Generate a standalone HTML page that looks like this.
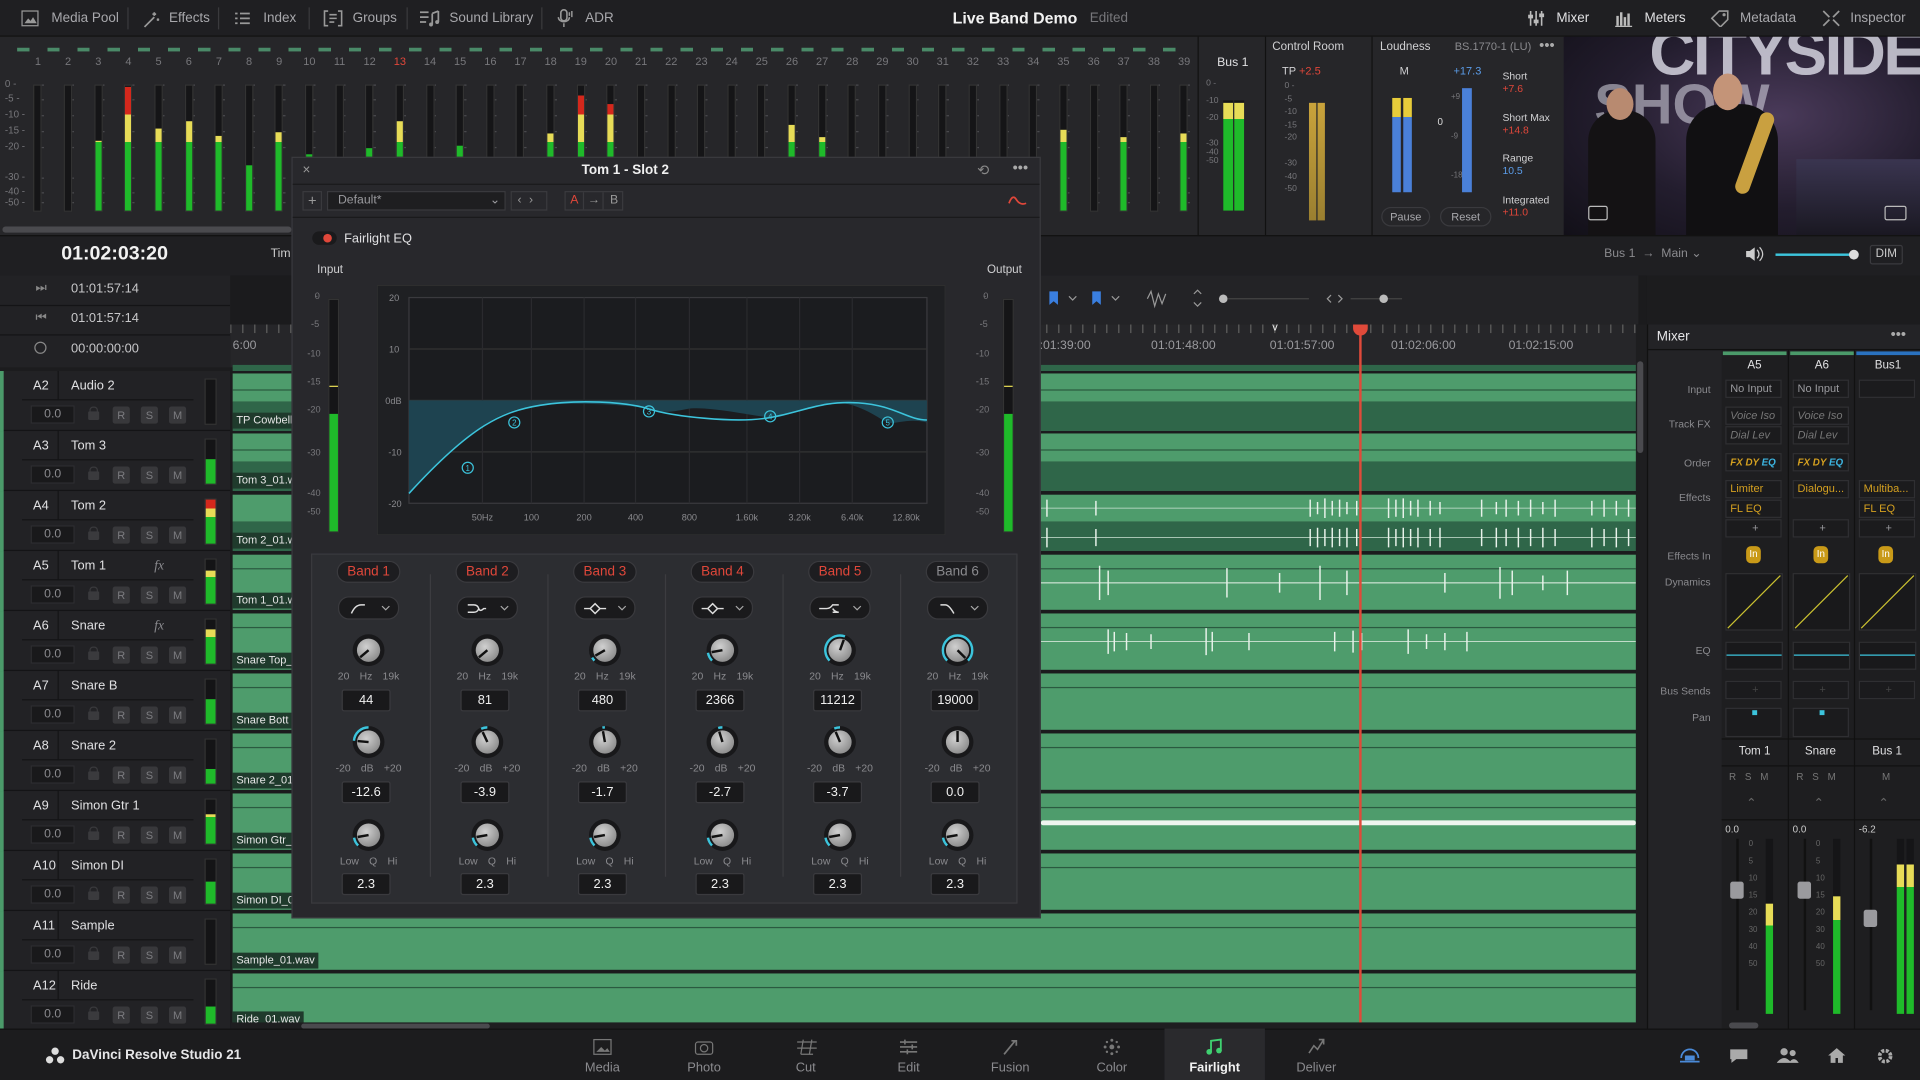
<!DOCTYPE html>
<html><head><meta charset="utf-8">
<style>
*{box-sizing:border-box;margin:0;padding:0}
html,body{width:1920px;height:1080px;overflow:hidden;background:#1c1c1e}
#w{position:absolute;left:0;top:0;width:1568px;height:882px;transform:scale(1.2244898);transform-origin:0 0;font-family:"Liberation Sans",sans-serif;color:#a8a8ac;font-size:10px;background:#1c1c1e;overflow:hidden}
.a{position:absolute}
.t{position:absolute;white-space:nowrap}
#top{left:0;top:0;width:1568px;height:30px;background:#1f1f22;border-bottom:1px solid #111}
#top .t{top:9px;font-size:11px;color:#a8a8ac}
.sep{position:absolute;top:6px;width:1px;height:18px;background:#3a3a3d}
#mtr{left:0;top:30px;width:978px;height:162px;background:#262629}
.dash{position:absolute;left:20px;width:958px;height:1px;background:repeating-linear-gradient(90deg,transparent 0 10px,#4a4a4e 10px 16px,transparent 16px 24.63px)}
.m{position:absolute;top:69px;width:7px;height:104px;background:#151517;border:1px solid #333}
.m i{position:absolute;left:0;right:0;bottom:0;background:linear-gradient(to top,#1fba2a 0 55%,#e7dc57 55% 77%,#d4281c 77%) bottom/100% 102px no-repeat}
.lbl{position:absolute;top:45px;font-size:9px;color:#77777b;width:20px;text-align:center}
.sc{position:absolute;left:4px;font-size:8px;color:#77777b}
.trk{position:absolute;left:0;width:188px;height:49px;background:#222225;border-bottom:1px solid #141416}
.trk .id{position:absolute;left:18px;top:0;width:30px;height:24px;line-height:24px;padding-left:9px;color:#e0e0e2;font-size:10.5px;border-right:1px solid #141416;border-bottom:1px solid #141416}
.trk .nm{position:absolute;left:48px;top:0;width:110px;height:24px;line-height:24px;padding-left:10px;color:#e0e0e2;font-size:10.5px;border-bottom:1px solid #141416}
.trk .fx{position:absolute;left:126px;top:6px;font-style:italic;color:#8a8a8e;font-size:11px;font-family:"Liberation Serif",serif}
.trk .v{position:absolute;left:25px;top:28px;width:36px;height:15px;background:#19191b;border:1px solid #2e2e31;text-align:center;line-height:13px;color:#8a8a8e}
.trk .lk{position:absolute;left:72px;top:33px;width:9px;height:7px;background:#3a3a3d;border-radius:1px}
.trk .lk:before{content:"";position:absolute;left:1px;top:-4px;width:5px;height:4px;border:1px solid #3a3a3d;border-bottom:0;border-radius:3px 3px 0 0}
.trk .b{position:absolute;top:29px;width:14px;height:14px;background:#38383b;border-radius:2px;text-align:center;line-height:14px;color:#7c7c80;font-size:9px}
.trk .gl{position:absolute;left:0;top:0;width:3px;height:49px;background:#4b9a6a}
.trk .tm{position:absolute;left:167px;top:6px;width:10px;height:38px;background:#141416;border:1px solid #333}
.trk .tm i{position:absolute;left:0;right:0;bottom:0;background:linear-gradient(to top,#1fba2a 0 60%,#e7dc57 60% 80%,#d4281c 80%) bottom/100% 36px no-repeat}
.ln{position:absolute;left:190px;width:1146px}
.lt{background:#4e9c6c}
.dk{background:#2f6649}
.cl{position:absolute;left:190px;height:13px;line-height:13px;padding:0 3px;background:#1f3a2c;color:#e6e6e6;font-size:9px}
#eq{left:238px;top:128px;width:612px;height:622px;background:#28282c;border:1px solid #3a3a3e;z-index:5}
.kn{position:absolute;width:30px;height:30px}
.pill{position:absolute;width:52px;height:18px;border-radius:9px;background:#1d1d20;border:1px solid #3a3a3e;text-align:center;line-height:16px;font-size:11px;color:#e0473a}
.dd{position:absolute;width:50px;height:19px;border-radius:9px;background:#1a1a1c;border:1px solid #3a3a3e}
.vb{position:absolute;width:40px;height:18px;background:#19191b;border:1px solid #3a3a3e;border-radius:2px;text-align:center;line-height:16px;color:#f0f0f0;font-size:10.5px}
.kl{position:absolute;font-size:8.5px;color:#8a8a8e;width:60px;text-align:center;word-spacing:6px}
#mix{left:1345px;top:265px;width:223px;height:577px;background:#232326;border-left:1px solid #111}
.ml{position:absolute;right:171px;font-size:8.5px;color:#8a8a8e;text-align:right;white-space:nowrap}
.mc{position:absolute;width:46px;height:15px;background:#1b1b1d;border:1px solid #2f2f32;font-size:9px;line-height:13px;padding-left:3px;color:#9a9a9e;white-space:nowrap;overflow:hidden}
.pg{position:absolute;top:840px;width:82px;height:42px;text-align:center;font-size:10.5px;color:#8a8a8e}
.pg span{position:absolute;left:0;right:0;top:26px}
.pg svg{position:absolute;left:33px;top:8px}
</style></head><body><div id="w">

<svg width="0" height="0" style="position:absolute"><defs>
<radialGradient id="kg" cx="40%" cy="35%" r="70%"><stop offset="0" stop-color="#d0d0d0"/><stop offset="1" stop-color="#8a8a8a"/></radialGradient>
</defs></svg>

<!-- TOP BAR -->
<div id="top" class="a">
<svg class="a" style="left:17px;top:8px" width="15" height="14"><rect x="1" y="1" width="13" height="12" fill="none" stroke="#999"/><path d="M3 11l3-4 2 2 2-3 3 5z" fill="#999"/></svg>
<div class="t" style="left:42px">Media Pool</div><div class="sep" style="left:104px"></div>
<svg class="a" style="left:115px;top:7px" width="16" height="16"><path d="M3 15l8-8M11 3v3M9.5 4.5h3M14 8v2M13 9h2" stroke="#999" stroke-width="1.4" fill="none"/></svg>
<div class="t" style="left:138px">Effects</div><div class="sep" style="left:178px"></div>
<svg class="a" style="left:191px;top:9px" width="14" height="12"><path d="M1 2h2M5 2h8M1 6h2M5 6h8M1 10h2M5 10h8" stroke="#999" stroke-width="1.4"/></svg>
<div class="t" style="left:215px">Index</div><div class="sep" style="left:252px"></div>
<svg class="a" style="left:264px;top:8px" width="16" height="14"><path d="M4 1H1v12h3M12 1h3v12h-3M5 4h6M5 7h6M5 10h4" stroke="#999" stroke-width="1.3" fill="none"/></svg>
<div class="t" style="left:288px">Groups</div><div class="sep" style="left:332px"></div>
<svg class="a" style="left:342px;top:8px" width="18" height="14"><path d="M1 2h7M1 6h7M1 10h5M11 3v9M16 1v9M11 3l5-2" stroke="#999" stroke-width="1.4" fill="none"/><circle cx="10" cy="12" r="1.6" fill="#999"/><circle cx="15" cy="10" r="1.6" fill="#999"/></svg>
<div class="t" style="left:367px">Sound Library</div><div class="sep" style="left:442px"></div>
<svg class="a" style="left:455px;top:7px" width="14" height="16"><rect x="3" y="1" width="5" height="9" rx="2.5" fill="none" stroke="#999" stroke-width="1.3"/><path d="M1 7c0 5 9 5 9 0M5.5 12v3M10 3v3M12 2v5" stroke="#999" stroke-width="1.2" fill="none"/></svg>
<div class="t" style="left:478px">ADR</div>
<div class="t" style="left:778px;top:7px;font-size:13px;font-weight:bold;color:#f2f2f2">Live Band Demo</div>
<div class="t" style="left:890px;color:#77777b">Edited</div>
<svg class="a" style="left:1247px;top:8px" width="15" height="14"><path d="M3 1v12M7.5 1v12M12 1v12" stroke="#bbb" stroke-width="1.3"/><rect x="1" y="4" width="4" height="3" fill="#bbb"/><rect x="5.5" y="8" width="4" height="3" fill="#bbb"/><rect x="10" y="3" width="4" height="3" fill="#bbb"/></svg>
<div class="t" style="left:1271px;color:#e0e0e2">Mixer</div>
<svg class="a" style="left:1319px;top:8px" width="14" height="14"><path d="M2 13V5M5 13V2M8 13V6M11 13V3" stroke="#bbb" stroke-width="2"/><path d="M0 13.5h14" stroke="#bbb"/></svg>
<div class="t" style="left:1343px;color:#e0e0e2">Meters</div>
<svg class="a" style="left:1397px;top:8px" width="16" height="14"><path d="M1 7l6-6h7v7l-6 6z" fill="none" stroke="#999" stroke-width="1.3"/><circle cx="11" cy="4" r="1.3" fill="#999"/></svg>
<div class="t" style="left:1421px">Metadata</div>
<svg class="a" style="left:1488px;top:8px" width="15" height="14"><path d="M1 1l5 5M1 13l5-5M14 1l-5 5M14 13l-5-5" stroke="#999" stroke-width="1.4"/></svg>
<div class="t" style="left:1511px">Inspector</div>
</div>

<!-- METERS -->
<div id="mtr" class="a">
<div class="a" style="left:20px;top:9px;width:958px;height:3px;background:repeating-linear-gradient(90deg,#4a8a68 0 10px,transparent 10px 24.63px);margin-left:-6px"></div>
</div>
<div class="a" style="left:0;top:30px;width:1px;height:1px">
</div>
<div class="a" style="left:0;top:0;width:978px;height:192px">
<div class="dash" style="top:69px"></div><div class="dash" style="top:81px"></div><div class="dash" style="top:94px"></div><div class="dash" style="top:107px"></div><div class="dash" style="top:120px"></div><div class="dash" style="top:145px"></div><div class="dash" style="top:157px"></div><div class="dash" style="top:165px"></div>
<div class="sc" style="top:64px">0 -</div><div class="sc" style="top:76px">-5 -</div><div class="sc" style="top:89px">-10 -</div><div class="sc" style="top:102px">-15 -</div><div class="sc" style="top:115px">-20 -</div><div class="sc" style="top:140px">-30 -</div><div class="sc" style="top:152px">-40 -</div><div class="sc" style="top:161px">-50 -</div>
<div class="lbl" style="left:21px">1</div><div class="lbl" style="left:45.6px">2</div><div class="lbl" style="left:70.3px">3</div><div class="lbl" style="left:94.9px">4</div><div class="lbl" style="left:119.5px">5</div><div class="lbl" style="left:144.2px">6</div><div class="lbl" style="left:168.8px">7</div><div class="lbl" style="left:193.4px">8</div><div class="lbl" style="left:218px">9</div><div class="lbl" style="left:242.7px">10</div><div class="lbl" style="left:267.3px">11</div><div class="lbl" style="left:291.9px">12</div><div class="lbl" style="left:316.6px;color:#e0473a">13</div><div class="lbl" style="left:341.2px">14</div><div class="lbl" style="left:365.8px">15</div><div class="lbl" style="left:390.5px">16</div><div class="lbl" style="left:415.1px">17</div><div class="lbl" style="left:439.7px">18</div><div class="lbl" style="left:464.3px">19</div><div class="lbl" style="left:489px">20</div><div class="lbl" style="left:513.6px">21</div><div class="lbl" style="left:538.2px">22</div><div class="lbl" style="left:562.9px">23</div><div class="lbl" style="left:587.5px">24</div><div class="lbl" style="left:612.1px">25</div><div class="lbl" style="left:636.8px">26</div><div class="lbl" style="left:661.4px">27</div><div class="lbl" style="left:686px">28</div><div class="lbl" style="left:710.6px">29</div><div class="lbl" style="left:735.3px">30</div><div class="lbl" style="left:759.9px">31</div><div class="lbl" style="left:784.5px">32</div><div class="lbl" style="left:809.2px">33</div><div class="lbl" style="left:833.8px">34</div><div class="lbl" style="left:858.4px">35</div><div class="lbl" style="left:883.1px">36</div><div class="lbl" style="left:907.7px">37</div><div class="lbl" style="left:932.3px">38</div><div class="lbl" style="left:957px">39</div>
<div class="m" style="left:27px"></div><div class="m" style="left:52px"></div><div class="m" style="left:77px"><i style="height:57px"></i></div><div class="m" style="left:101px"><i style="height:101px"></i></div><div class="m" style="left:126px"><i style="height:67px"></i></div><div class="m" style="left:151px"><i style="height:73px"></i></div><div class="m" style="left:175px"><i style="height:61px"></i></div><div class="m" style="left:200px"><i style="height:37px"></i></div><div class="m" style="left:224px"><i style="height:64px"></i></div><div class="m" style="left:249px"><i style="height:46px"></i></div><div class="m" style="left:274px"></div><div class="m" style="left:298px"><i style="height:51px"></i></div><div class="m" style="left:323px"><i style="height:73px"></i></div><div class="m" style="left:348px"></div><div class="m" style="left:372px"><i style="height:53px"></i></div><div class="m" style="left:397px"></div><div class="m" style="left:421px"></div><div class="m" style="left:446px"><i style="height:63px"></i></div><div class="m" style="left:471px"><i style="height:94px"></i></div><div class="m" style="left:495px"><i style="height:87px"></i></div><div class="m" style="left:520px"></div><div class="m" style="left:545px"></div><div class="m" style="left:569px"></div><div class="m" style="left:594px"></div><div class="m" style="left:618px"></div><div class="m" style="left:643px"><i style="height:70px"></i></div><div class="m" style="left:668px"><i style="height:60px"></i></div><div class="m" style="left:692px"></div><div class="m" style="left:717px"></div><div class="m" style="left:742px"></div><div class="m" style="left:766px"></div><div class="m" style="left:791px"></div><div class="m" style="left:816px"></div><div class="m" style="left:840px"></div><div class="m" style="left:865px"><i style="height:66px"></i></div><div class="m" style="left:890px"></div><div class="m" style="left:914px"><i style="height:60px"></i></div><div class="m" style="left:939px"></div><div class="m" style="left:963px"><i style="height:63px"></i></div>
<div class="a" style="left:2px;top:185px;width:236px;height:5px;border-radius:3px;background:#4a4a4e"></div>
</div>

<!-- Bus1 / control room / loudness -->
<div class="a" style="left:978px;top:30px;width:300px;height:162px;background:#262629;border-left:1px solid #111">
<div class="t" style="left:15px;top:16px;color:#e0e0e2;font-size:10px">Bus 1</div>
<div class="sc" style="left:6px;top:35px;font-size:7px">0 -<br><br>-10<br><br>-20<br><br><br>-30<br>-40<br>-50</div>
<div class="a" style="left:20px;top:52px;width:8px;height:90px;background:#151517"><i class="a" style="left:0;bottom:0;width:8px;height:88px;background:linear-gradient(to top,#1fba2a 0 85%,#e7dc57 85%)"></i></div>
<div class="a" style="left:29px;top:52px;width:8px;height:90px;background:#151517"><i class="a" style="left:0;bottom:0;width:8px;height:88px;background:linear-gradient(to top,#1fba2a 0 85%,#e7dc57 85%)"></i></div>
<div class="a" style="left:54px;top:0;width:1px;height:162px;background:#111"></div>
<div class="t" style="left:60px;top:3px;color:#d0d0d2;font-size:9.5px">Control Room</div>
<div class="t" style="left:68px;top:23px;color:#d0d0d2;font-size:9px">TP <span style="color:#e0473a">+2.5</span></div>
<div class="sc" style="left:70px;top:36px;font-size:7px;line-height:10.5px">0 -<br>-5<br>-10<br>-15<br>-20<br><br>-30<br>-40<br>-50</div>
<div class="a" style="left:90px;top:54px;width:6px;height:96px;background:linear-gradient(#c9a33b,#9a7f30)"></div>
<div class="a" style="left:97px;top:54px;width:6px;height:96px;background:linear-gradient(#c9a33b,#9a7f30)"></div>
<div class="a" style="left:141px;top:0;width:1px;height:162px;background:#111"></div>
<div class="t" style="left:148px;top:3px;color:#d0d0d2;font-size:9.5px">Loudness</div>
<div class="t" style="left:209px;top:3px;color:#8a8a8e;font-size:9px">BS.1770-1 (LU)</div>
<div class="t" style="left:278px;top:0px;color:#aaa;font-size:12px">•••</div>
<div class="t" style="left:164px;top:23px;color:#d0d0d2;font-size:9px">M</div>
<div class="t" style="left:208px;top:23px;color:#5b9ce8;font-size:9px">+17.3</div>
<div class="a" style="left:158px;top:50px;width:7px;height:77px;background:linear-gradient(#e7cc3a 0 20%,#4a80d8 20%)"></div>
<div class="a" style="left:167px;top:50px;width:7px;height:77px;background:linear-gradient(#e7cc3a 0 20%,#4a80d8 20%)"></div>
<div class="t" style="left:195px;top:65px;color:#ddd;font-size:8px">0</div>
<div class="sc" style="left:206px;top:34px;font-size:6.5px;line-height:32px">+9<br>-9<br>-18</div>
<div class="a" style="left:215px;top:42px;width:8px;height:85px;background:#4a80d8"></div>
<div class="t" style="left:248px;top:27px;color:#d0d0d2;font-size:8.5px;line-height:10px">Short<br><span style="color:#e0473a">+7.6</span></div>
<div class="t" style="left:248px;top:61px;color:#d0d0d2;font-size:8.5px;line-height:10px">Short Max<br><span style="color:#e0473a">+14.8</span></div>
<div class="t" style="left:248px;top:94px;color:#d0d0d2;font-size:8.5px;line-height:10px">Range<br><span style="color:#5b9ce8">10.5</span></div>
<div class="t" style="left:248px;top:128px;color:#d0d0d2;font-size:8.5px;line-height:10px">Integrated<br><span style="color:#e0473a">+11.0</span></div>
<div class="a" style="left:149px;top:139px;width:40px;height:16px;border-radius:8px;border:1px solid #3a3a3e;text-align:center;line-height:14px;font-size:9px">Pause</div>
<div class="a" style="left:197px;top:139px;width:42px;height:16px;border-radius:8px;border:1px solid #3a3a3e;text-align:center;line-height:14px;font-size:9px">Reset</div>
</div>
<!-- video -->
<div class="a" style="left:1277px;top:30px;width:291px;height:162px;overflow:hidden;background:radial-gradient(ellipse at 60% 40%,#4a3a5a 0,#231d2e 55%,#121018 100%)">
<div class="t" style="left:70px;top:-16px;font-size:52px;font-weight:bold;color:rgba(235,235,245,.75);letter-spacing:-2px">CITYSIDE</div>
<div class="t" style="left:25px;top:28px;font-size:46px;font-weight:bold;color:rgba(235,235,245,.5)">SHOW</div>
<div class="a" style="left:20px;top:60px;width:55px;height:102px;background:#141214;border-radius:25px 25px 0 0"></div>
<div class="a" style="left:35px;top:42px;width:22px;height:26px;background:#b88a70;border-radius:50%"></div>
<div class="a" style="left:100px;top:55px;width:75px;height:107px;background:#111012;border-radius:30px 30px 0 0"></div>
<div class="a" style="left:122px;top:30px;width:24px;height:30px;background:#c49478;border-radius:50%"></div>
<div class="a" style="left:150px;top:60px;width:12px;height:70px;background:#c9a040;transform:rotate(20deg);border-radius:6px"></div>
<div class="a" style="left:190px;top:100px;width:101px;height:62px;background:linear-gradient(#3a3550,#1a1822)"></div>
<div class="a" style="left:20px;top:138px;width:16px;height:12px;border:1px solid #bbb;border-radius:2px"></div>
<div class="a" style="left:262px;top:138px;width:18px;height:12px;border:1px solid #bbb;border-radius:2px"></div>
</div>

<!-- timecode row -->
<div class="a" style="left:0;top:192px;width:1568px;height:33px;background:#1f1f22;border-top:1px solid #111"></div>
<div class="t" style="left:50px;top:199px;font-size:16px;font-weight:bold;color:#f2f2f2">01:02:03:20</div>
<div class="t" style="left:221px;top:202px;font-size:10px;color:#ccc">Tim</div>
<div class="t" style="left:1310px;top:202px;font-size:10px;color:#8a8a8e">Bus 1 &nbsp;→ &nbsp;Main ⌄</div>
<svg class="a" style="left:1425px;top:201px" width="16" height="13"><path d="M1 4h3l4-3v11l-4-3H1z" fill="#ccc"/><path d="M10 3q3 3.5 0 7M12 1q5 5.5 0 11" stroke="#ccc" fill="none"/></svg>
<div class="a" style="left:1450px;top:207px;width:66px;height:2px;background:#3cc4dc"></div>
<div class="a" style="left:1510px;top:204px;width:8px;height:8px;border-radius:50%;background:#ddd"></div>
<div class="a" style="left:1527px;top:200px;width:27px;height:16px;border:1px solid #3a3a3e;border-radius:2px;text-align:center;line-height:14px;font-size:9.5px;color:#ccc">DIM</div>

<!-- left time rows -->
<div class="a" style="left:0;top:225px;width:188px;height:75px;background:#222225"></div>
<div class="a" style="left:0;top:249px;width:188px;height:1px;background:#141416"></div>
<div class="a" style="left:0;top:273px;width:188px;height:1px;background:#141416"></div>
<div class="t" style="left:29px;top:230px;color:#888">⏭</div><div class="t" style="left:58px;top:230px;font-size:10.5px;color:#c8c8ca">01:01:57:14</div>
<div class="t" style="left:29px;top:254px;color:#888">⏮</div><div class="t" style="left:58px;top:254px;font-size:10.5px;color:#c8c8ca">01:01:57:14</div>
<div class="a" style="left:28px;top:279px;width:10px;height:10px;border:1px solid #888;border-radius:50%"></div><div class="t" style="left:58px;top:279px;font-size:10.5px;color:#c8c8ca">00:00:00:00</div>
<div class="a" style="left:188px;top:225px;width:50px;height:40px;background:#232326"></div>
<svg class="a" style="left:208px;top:236px" width="22" height="16"><path d="M1 2h14M1 6h14M1 10h8M11 11l3 3 6-7" stroke="#888" stroke-width="1.4" fill="none"/></svg>

<!-- tracks -->
<div class="trk" style="top:303px"><div class="gl"></div><div class="id">A2</div><div class="nm">Audio 2</div><div class="v">0.0</div><div class="lk"></div><div class="b" style="left:92px">R</div><div class="b" style="left:115px">S</div><div class="b" style="left:138px">M</div><div class="tm"></div></div>
<div class="trk" style="top:352px"><div class="gl"></div><div class="id">A3</div><div class="nm">Tom 3</div><div class="v">0.0</div><div class="lk"></div><div class="b" style="left:92px">R</div><div class="b" style="left:115px">S</div><div class="b" style="left:138px">M</div><div class="tm"><i style="height:20px"></i></div></div>
<div class="trk" style="top:401px"><div class="gl"></div><div class="id">A4</div><div class="nm">Tom 2</div><div class="v">0.0</div><div class="lk"></div><div class="b" style="left:92px">R</div><div class="b" style="left:115px">S</div><div class="b" style="left:138px">M</div><div class="tm"><i style="height:36px"></i></div></div>
<div class="trk" style="top:450px"><div class="gl"></div><div class="id">A5</div><div class="nm">Tom 1</div><div class="fx">fx</div><div class="v">0.0</div><div class="lk"></div><div class="b" style="left:92px">R</div><div class="b" style="left:115px">S</div><div class="b" style="left:138px">M</div><div class="tm"><i style="height:27px"></i></div></div>
<div class="trk" style="top:499px"><div class="gl"></div><div class="id">A6</div><div class="nm">Snare</div><div class="fx">fx</div><div class="v">0.0</div><div class="lk"></div><div class="b" style="left:92px">R</div><div class="b" style="left:115px">S</div><div class="b" style="left:138px">M</div><div class="tm"><i style="height:28px"></i></div></div>
<div class="trk" style="top:548px"><div class="gl"></div><div class="id">A7</div><div class="nm">Snare B</div><div class="v">0.0</div><div class="lk"></div><div class="b" style="left:92px">R</div><div class="b" style="left:115px">S</div><div class="b" style="left:138px">M</div><div class="tm"><i style="height:20px"></i></div></div>
<div class="trk" style="top:597px"><div class="gl"></div><div class="id">A8</div><div class="nm">Snare 2</div><div class="v">0.0</div><div class="lk"></div><div class="b" style="left:92px">R</div><div class="b" style="left:115px">S</div><div class="b" style="left:138px">M</div><div class="tm"><i style="height:12px"></i></div></div>
<div class="trk" style="top:646px"><div class="gl"></div><div class="id">A9</div><div class="nm">Simon Gtr 1</div><div class="v">0.0</div><div class="lk"></div><div class="b" style="left:92px">R</div><div class="b" style="left:115px">S</div><div class="b" style="left:138px">M</div><div class="tm"><i style="height:24px"></i></div></div>
<div class="trk" style="top:695px"><div class="gl"></div><div class="id">A10</div><div class="nm">Simon DI</div><div class="v">0.0</div><div class="lk"></div><div class="b" style="left:92px">R</div><div class="b" style="left:115px">S</div><div class="b" style="left:138px">M</div><div class="tm"><i style="height:18px"></i></div></div>
<div class="trk" style="top:744px"><div class="gl"></div><div class="id">A11</div><div class="nm">Sample</div><div class="v">0.0</div><div class="lk"></div><div class="b" style="left:92px">R</div><div class="b" style="left:115px">S</div><div class="b" style="left:138px">M</div><div class="tm"></div></div>
<div class="trk" style="top:793px"><div class="gl"></div><div class="id">A12</div><div class="nm">Ride</div><div class="v">0.0</div><div class="lk"></div><div class="b" style="left:92px">R</div><div class="b" style="left:115px">S</div><div class="b" style="left:138px">M</div><div class="tm"><i style="height:14px"></i></div></div>

<!-- timeline -->
<div class="a" style="left:188px;top:225px;width:1157px;height:615px;background:#1b1b1d"></div>
<div class="a" style="left:238px;top:225px;width:1100px;height:40px;background:#232326"></div>
<svg class="a" style="left:855px;top:236px" width="290" height="16"><path d="M2 2h7v11l-3.5-3L2 13z" fill="#3a7fe0"/><path d="M18 6l3 3 3-3" stroke="#999" fill="none"/><path d="M37 2h7v11l-3.5-3L37 13z" fill="#3a7fe0"/><path d="M53 6l3 3 3-3" stroke="#999" fill="none"/><path d="M82 8l3-6 3 12 3-10 3 8 3-8" stroke="#999" fill="none"/><path d="M120 4l3-3 3 3M120 11l3 3 3-3" stroke="#999" fill="none"/><circle cx="144" cy="8" r="3.5" fill="#bbb"/><path d="M148 8h66" stroke="#444"/><path d="M232 5l-3 3 3 3M238 5l3 3-3 3" stroke="#999" fill="none"/><path d="M248 8h66" stroke="#444"/><circle cx="275" cy="8" r="3.5" fill="#bbb"/></svg>
<div class="a" style="left:188px;top:265px;width:1150px;height:35px;background:#262629;background-image:repeating-linear-gradient(90deg,#555 0 1px,transparent 1px 9.8px);background-size:100% 7px;background-repeat:no-repeat"></div>
<div class="t" style="left:190px;top:277px;color:#9a9a9e;font-size:10px">6:00</div>
<div class="t" style="left:849px;top:277px;color:#9a9a9e;font-size:10px">:01:39:00</div>
<div class="t" style="left:940px;top:277px;color:#9a9a9e;font-size:10px">01:01:48:00</div>
<div class="t" style="left:1037px;top:277px;color:#9a9a9e;font-size:10px">01:01:57:00</div>
<div class="t" style="left:1136px;top:277px;color:#9a9a9e;font-size:10px">01:02:06:00</div>
<div class="t" style="left:1232px;top:277px;color:#9a9a9e;font-size:10px">01:02:15:00</div>
<div class="t" style="left:1039px;top:262px;color:#eee;font-size:9px">v</div>

<div class="ln dk" style="top:298px;height:5px"></div>
<div class="ln lt" style="top:305px;height:23px;border-top:0"></div><div class="ln dk" style="top:328px;height:24px"></div>
<div class="ln lt" style="top:354px;height:23px"></div><div class="ln dk" style="top:377px;height:24px"></div>
<div class="ln lt" style="top:404px;height:22px"></div><div class="ln dk" style="top:426px;height:24px"></div>
<div class="ln lt" style="top:453px;height:45px"></div>
<div class="ln lt" style="top:501px;height:46px"></div>
<div class="ln lt" style="top:550px;height:46px"></div>
<div class="ln lt" style="top:599px;height:46px"></div>
<div class="ln lt" style="top:648px;height:46px"></div>
<div class="ln lt" style="top:697px;height:46px"></div>
<div class="ln lt" style="top:746px;height:46px"></div>
<div class="ln lt" style="top:795px;height:40px"></div>
<!-- inner lines -->
<div class="ln" style="top:318px;height:1px;background:#2a5a40"></div>
<div class="ln" style="top:367px;height:1px;background:#2a5a40"></div>
<div class="ln" style="top:464px;height:1px;background:#2a5a40"></div>
<div class="ln" style="top:512px;height:1px;background:#2a5a40"></div>
<div class="ln" style="top:561px;height:1px;background:#2a5a40"></div>
<div class="ln" style="top:610px;height:1px;background:#2a5a40"></div>
<div class="ln" style="top:659px;height:1px;background:#2a5a40"></div>
<div class="ln" style="top:708px;height:1px;background:#2a5a40"></div>
<div class="ln" style="top:757px;height:1px;background:#2a5a40"></div>
<div class="ln" style="top:806px;height:1px;background:#2a5a40"></div>
<!-- waveforms -->
<svg class="a" style="left:850px;top:400px" width="486" height="140">
<g stroke="#e8f2ea" stroke-width="1.2" fill="none">
<path d="M0 15h486M0 39h486" stroke="#cfe5d6" stroke-width=".6"/>
<path d="M5 8v14M45 9v12M220 8v14M226 10v10M232 7v16M238 9v12M244 8v14M250 10v10M258 9v12M284 7v16M290 8v14M296 7v16M302 9v12M308 8v14M318 9v12M326 10v10M360 8v14M372 10v10M380 8v14M390 9v12M400 8v14M410 10v10M420 8v14M450 9v12M460 8v14M470 9v12M480 8v14"/>
<path d="M5 31v16M45 32v14M220 32v14M226 31v16M232 32v14M238 31v16M244 32v14M250 31v16M258 32v14M284 31v16M290 32v14M296 31v16M302 32v14M308 31v16M318 32v14M326 31v16M360 32v14M372 31v16M380 32v14M390 31v16M400 32v14M410 31v16M420 32v14M450 31v16M460 32v14M470 31v16M480 32v14"/>
<path d="M0 76h486" stroke-width=".8"/>
<path d="M48 62v28M55 66v20M152 64v24M195 68v16M228 62v28M250 66v20M330 68v16M375 63v26M385 66v20M410 70v12M430 66v20"/>
<path d="M0 124h486" stroke-width=".6"/>
<path d="M55 114v20M60 116v16M70 117v14M90 118v12M135 113v22M140 116v16M170 117v14M240 116v16M255 115v18M262 117v14M300 114v20M315 118v12M330 117v14M348 116v16"/>
</g></svg>
<div class="a" style="left:850px;top:670px;width:486px;height:4px;background:#eef5ef;border-radius:2px"></div>
<div class="cl" style="top:337px">TP Cowbell</div><div class="cl" style="top:386px">Tom 3_01.w</div><div class="cl" style="top:435px">Tom 2_01.w</div><div class="cl" style="top:484px">Tom 1_01.w</div><div class="cl" style="top:533px">Snare Top_</div><div class="cl" style="top:582px">Snare Bott</div><div class="cl" style="top:631px">Snare 2_01</div><div class="cl" style="top:680px">Simon Gtr_</div><div class="cl" style="top:729px">Simon DI_0</div><div class="cl" style="top:778px">Sample_01.wav</div><div class="cl" style="top:826px">Ride_01.wav</div>
<div class="a" style="left:1110px;top:268px;width:1.5px;height:568px;background:#e04a3a"></div>
<div class="a" style="left:1105px;top:265px;width:12px;height:9px;background:#e04a3a;border-radius:0 0 6px 6px"></div>
<div class="a" style="left:1336px;top:265px;width:9px;height:575px;background:#1e1e20"></div>
<div class="a" style="left:1337px;top:295px;width:5px;height:75px;background:#4a4a4e;border-radius:3px"></div>
<div class="a" style="left:188px;top:835px;width:1150px;height:5px;background:#1e1e20"></div>
<div class="a" style="left:246px;top:836px;width:154px;height:4px;background:#4a4a4e;border-radius:2px"></div>

<!-- EQ WINDOW -->
<div id="eq" class="a">
<div class="a" style="left:0;top:0;width:610px;height:22px;border-bottom:1px solid #1a1a1c"></div>
<div class="t" style="left:8px;top:4px;font-size:11px;color:#999">×</div>
<div class="t" style="left:236px;top:4px;font-size:11px;color:#f0f0f0;font-weight:bold">Tom 1 - Slot 2</div>
<div class="t" style="left:559px;top:3px;font-size:12px;color:#888">⟲</div>
<div class="t" style="left:588px;top:1px;font-size:12px;color:#aaa">•••</div>
<div class="a" style="left:8px;top:27px;width:16px;height:16px;border:1px solid #3a3a3e;text-align:center;line-height:14px;font-size:12px;color:#999">+</div>
<div class="a" style="left:28px;top:27px;width:146px;height:16px;background:#1e1e20;border:1px solid #3a3a3e;font-size:10px;line-height:14px;padding-left:8px;color:#9a9a9e">Default*<span style="position:absolute;left:132px">⌄</span></div>
<div class="a" style="left:178px;top:27px;width:30px;height:16px;border:1px solid #3a3a3e;font-size:10px;line-height:14px;color:#999;text-align:center;letter-spacing:6px">‹›</div>
<div class="a" style="left:222px;top:27px;width:48px;height:16px;border:1px solid #3a3a3e;font-size:10px;line-height:14px;color:#999"><span class="a" style="left:0;width:15px;text-align:center;color:#e0473a;border-right:1px solid #3a3a3e">A</span><span class="a" style="left:16px;width:15px;text-align:center;border-right:1px solid #3a3a3e">→</span><span class="a" style="left:32px;width:15px;text-align:center">B</span></div>
<svg class="a" style="left:584px;top:28px" width="16" height="12"><path d="M1 9q3-8 6-3t8 3" stroke="#e0473a" stroke-width="1.4" fill="none"/></svg>
<div class="a" style="left:0;top:48px;width:610px;height:1px;background:#1a1a1c"></div>
<div class="a" style="left:16px;top:60px;width:20px;height:11px;border-radius:6px;background:#1a1a1c"></div><div class="a" style="left:25px;top:62px;width:7px;height:7px;border-radius:50%;background:#e0473a"></div>
<div class="t" style="left:42px;top:60px;font-size:10.5px;color:#e0e0e2">Fairlight EQ</div>
<div class="t" style="left:20px;top:86px;font-size:9.5px;color:#d0d0d2">Input</div>
<div class="t" style="left:567px;top:86px;font-size:9.5px;color:#d0d0d2">Output</div>
<div class="sc" style="left:10px;top:113px;font-size:7.5px;line-height:0">
<span class="a" style="left:8px;top:0">0 -</span><span class="a" style="left:5px;top:23px">-5 -</span><span class="a" style="left:2px;top:47px">-10 -</span><span class="a" style="left:2px;top:70px">-15 -</span><span class="a" style="left:2px;top:93px">-20 -</span><span class="a" style="left:2px;top:128px">-30 -</span><span class="a" style="left:2px;top:161px">-40 -</span><span class="a" style="left:2px;top:176px">-50 -</span></div>
<div class="a" style="left:29px;top:115px;width:9px;height:191px;background:#151517;border:1px solid #333"><i class="a" style="left:0;bottom:0;width:7px;height:96px;background:#1fba2a"></i><i class="a" style="left:0;top:70px;width:7px;height:1px;background:#e7dc57"></i></div>
<div class="sc" style="left:556px;top:113px;font-size:7.5px;line-height:0">
<span class="a" style="left:8px;top:0">0 -</span><span class="a" style="left:5px;top:23px">-5 -</span><span class="a" style="left:2px;top:47px">-10 -</span><span class="a" style="left:2px;top:70px">-15 -</span><span class="a" style="left:2px;top:93px">-20 -</span><span class="a" style="left:2px;top:128px">-30 -</span><span class="a" style="left:2px;top:161px">-40 -</span><span class="a" style="left:2px;top:176px">-50 -</span></div>
<div class="a" style="left:580px;top:115px;width:9px;height:191px;background:#151517;border:1px solid #333"><i class="a" style="left:0;bottom:0;width:7px;height:96px;background:#1fba2a"></i><i class="a" style="left:0;top:70px;width:7px;height:1px;background:#e7dc57"></i></div>
<!-- graph -->
<svg class="a" style="left:69px;top:104px" width="464" height="204">
<rect width="464" height="204" fill="#1f2023" stroke="#333" />
<g transform="translate(-307,-232)">
<rect x="333" y="242" width="423" height="168" fill="#1b1c1f" stroke="#3a3a3e"/>
<path d="M333 284h423M333 326h423M333 368h423" stroke="#333"/>
<path d="M393 242v168M433 242v168M476 242v168M518 242v168M562 242v168M609 242v168M652 242v168M695 242v168" stroke="#2a2a2e"/>
<path d="M333 326H756V344 C740 340 730 346 724 344 S700 327 680 328 S640 341 628 340 S575 330 560 333 S540 336 529 333 S470 327 440 330 S385 345 333 402Z" fill="#1e4350"/>
<path d="M333 402 C385 345 410 335 440 330 S510 327 529 333 S600 345 628 340 S670 326 700 328 S740 342 756 342" stroke="#3cc4dc" stroke-width="1.3" fill="none"/>
<g stroke="#3cc4dc" fill="none" font-size="7" font-family="Liberation Sans"><circle cx="381" cy="381" r="4.5"/><circle cx="419" cy="344" r="4.5"/><circle cx="529" cy="335" r="4.5"/><circle cx="628" cy="339" r="4.5"/><circle cx="724" cy="344" r="4.5"/></g>
<g fill="#3cc4dc" font-size="6.5" font-family="Liberation Sans" text-anchor="middle"><text x="381" y="383.5">1</text><text x="419" y="346.5">2</text><text x="529" y="337.5">3</text><text x="628" y="341.5">4</text><text x="724" y="346.5">5</text></g>
<g fill="#8a8a8e" font-size="7.5" font-family="Liberation Sans" text-anchor="end"><text x="325" y="245">20</text><text x="325" y="287">10</text><text x="327" y="329">0dB</text><text x="327" y="371">-10</text><text x="327" y="413">-20</text></g>
<g fill="#8a8a8e" font-size="7.5" font-family="Liberation Sans" text-anchor="middle"><text x="393" y="424">50Hz</text><text x="433" y="424">100</text><text x="476" y="424">200</text><text x="518" y="424">400</text><text x="562" y="424">800</text><text x="609" y="424">1.60k</text><text x="652" y="424">3.20k</text><text x="695" y="424">6.40k</text><text x="739" y="424">12.80k</text></g>
</g></svg>
<!-- bands panel -->
<div class="a" style="left:15px;top:323px;width:577px;height:286px;background:#2c2d31;border:1px solid #3a3a3e"></div>
<div class="a" style="left:112px;top:340px;width:1px;height:247px;background:#3c3c40"></div>
<div class="a" style="left:208px;top:340px;width:1px;height:247px;background:#3c3c40"></div>
<div class="a" style="left:304px;top:340px;width:1px;height:247px;background:#3c3c40"></div>
<div class="a" style="left:400px;top:340px;width:1px;height:247px;background:#3c3c40"></div>
<div class="a" style="left:496px;top:340px;width:1px;height:247px;background:#3c3c40"></div>
</div>

<!-- band controls (absolute page coords, above eq) -->
<div class="a" style="left:0;top:0;width:1568px;height:882px;z-index:6;pointer-events:none">
<div class="pill" style="left:275px;top:458px">Band 1</div><div class="pill" style="left:372px;top:458px">Band 2</div><div class="pill" style="left:468px;top:458px">Band 3</div><div class="pill" style="left:564px;top:458px">Band 4</div><div class="pill" style="left:660px;top:458px">Band 5</div><div class="pill" style="left:756px;top:458px;color:#8a8a8e">Band 6</div>
<div class="dd" style="left:276px;top:487px"><svg class="a" style="left:8px;top:3px" width="34" height="12"><path d="M2 10q3-7 8-7h3" stroke="#ddd" stroke-width="1.2" fill="none"/><path d="M27 4l3 3 3-3" stroke="#aaa" fill="none"/></svg></div>
<div class="dd" style="left:373px;top:487px"><svg class="a" style="left:6px;top:3px" width="36" height="12"><path d="M2 3h5q3 0 4 3t4 0h2M2 9h5q3 0 4-3" stroke="#ddd" stroke-width="1.2" fill="none"/><path d="M29 4l3 3 3-3" stroke="#aaa" fill="none"/></svg></div>
<div class="dd" style="left:469px;top:487px"><svg class="a" style="left:6px;top:3px" width="36" height="12"><path d="M1 6h5l4-4 4 4-4 4-4-4M14 6h5" stroke="#ddd" stroke-width="1.2" fill="none"/><path d="M29 4l3 3 3-3" stroke="#aaa" fill="none"/></svg></div>
<div class="dd" style="left:565px;top:487px"><svg class="a" style="left:6px;top:3px" width="36" height="12"><path d="M1 6h5l4-4 4 4-4 4-4-4M14 6h5" stroke="#ddd" stroke-width="1.2" fill="none"/><path d="M29 4l3 3 3-3" stroke="#aaa" fill="none"/></svg></div>
<div class="dd" style="left:661px;top:487px"><svg class="a" style="left:6px;top:3px" width="36" height="12"><path d="M1 6h6q3 0 5-3h5M12 9h5q-3 0-5-3" stroke="#ddd" stroke-width="1.2" fill="none"/><path d="M29 4l3 3 3-3" stroke="#aaa" fill="none"/></svg></div>
<div class="dd" style="left:757px;top:487px"><svg class="a" style="left:8px;top:3px" width="34" height="12"><path d="M2 3h4q3 0 7 7" stroke="#ddd" stroke-width="1.2" fill="none"/><path d="M27 4l3 3 3-3" stroke="#aaa" fill="none"/></svg></div>

<!-- freq knobs -->
<svg class="kn" style="left:286px;top:516px" viewBox="-15 -15 30 30"><circle r="13" fill="#18181a"/><circle r="9.5" fill="url(#kg)"/><line x1="0" y1="0" x2="-6.89" y2="5.79" stroke="#111" stroke-width="2"/></svg>
<svg class="kn" style="left:383px;top:516px" viewBox="-15 -15 30 30"><circle r="13" fill="#18181a"/><circle r="9.5" fill="url(#kg)"/><line x1="0" y1="0" x2="-6.89" y2="5.79" stroke="#111" stroke-width="2"/></svg>
<svg class="kn" style="left:479px;top:516px" viewBox="-15 -15 30 30"><circle r="13" fill="#18181a"/><path d="M-8.49,8.49 A12 12 0 0 1 -10.4,6" stroke="#3cc4dc" stroke-width="2" fill="none"/><circle r="9.5" fill="url(#kg)"/><line x1="0" y1="0" x2="-7.8" y2="4.5" stroke="#111" stroke-width="2"/></svg>
<svg class="kn" style="left:575px;top:516px" viewBox="-15 -15 30 30"><circle r="13" fill="#18181a"/><path d="M-8.49,8.49 A12 12 0 0 1 -11.82,2.08" stroke="#3cc4dc" stroke-width="2" fill="none"/><circle r="9.5" fill="url(#kg)"/><line x1="0" y1="0" x2="-8.86" y2="1.56" stroke="#111" stroke-width="2"/></svg>
<svg class="kn" style="left:671px;top:516px" viewBox="-15 -15 30 30"><circle r="13" fill="#18181a"/><path d="M-8.49,8.49 A12 12 0 0 1 4.10,-11.28" stroke="#3cc4dc" stroke-width="2" fill="none"/><circle r="9.5" fill="url(#kg)"/><line x1="0" y1="0" x2="3.08" y2="-8.46" stroke="#111" stroke-width="2"/></svg>
<svg class="kn" style="left:767px;top:516px" viewBox="-15 -15 30 30"><circle r="13" fill="#18181a"/><path d="M-8.49,8.49 A12 12 0 1 1 8.49,8.49" stroke="#3cc4dc" stroke-width="2" fill="none"/><circle r="9.5" fill="url(#kg)"/><line x1="0" y1="0" x2="6.36" y2="6.36" stroke="#111" stroke-width="2"/></svg>
<div class="kl" style="left:271px;top:547px">20 Hz 19k</div><div class="kl" style="left:368px;top:547px">20 Hz 19k</div><div class="kl" style="left:464px;top:547px">20 Hz 19k</div><div class="kl" style="left:560px;top:547px">20 Hz 19k</div><div class="kl" style="left:656px;top:547px">20 Hz 19k</div><div class="kl" style="left:752px;top:547px">20 Hz 19k</div>
<div class="vb" style="left:279px;top:563px">44</div><div class="vb" style="left:376px;top:563px">81</div><div class="vb" style="left:472px;top:563px">480</div><div class="vb" style="left:568px;top:563px">2366</div><div class="vb" style="left:664px;top:563px">11212</div><div class="vb" style="left:760px;top:563px">19000</div>
<!-- gain knobs -->
<svg class="kn" style="left:286px;top:591px" viewBox="-15 -15 30 30"><circle r="13" fill="#18181a"/><path d="M0,-12 A12 12 0 0 0 -11.95,-1.05" stroke="#3cc4dc" stroke-width="2" fill="none"/><circle r="9.5" fill="url(#kg)"/><line x1="0" y1="0" x2="-8.97" y2="-0.78" stroke="#111" stroke-width="2"/></svg>
<svg class="kn" style="left:383px;top:591px" viewBox="-15 -15 30 30"><circle r="13" fill="#18181a"/><path d="M0,-12 A12 12 0 0 0 -5.07,-10.88" stroke="#3cc4dc" stroke-width="2" fill="none"/><circle r="9.5" fill="url(#kg)"/><line x1="0" y1="0" x2="-3.8" y2="-8.16" stroke="#111" stroke-width="2"/></svg>
<svg class="kn" style="left:479px;top:591px" viewBox="-15 -15 30 30"><circle r="13" fill="#18181a"/><path d="M0,-12 A12 12 0 0 0 -2.08,-11.82" stroke="#3cc4dc" stroke-width="2" fill="none"/><circle r="9.5" fill="url(#kg)"/><line x1="0" y1="0" x2="-1.56" y2="-8.86" stroke="#111" stroke-width="2"/></svg>
<svg class="kn" style="left:575px;top:591px" viewBox="-15 -15 30 30"><circle r="13" fill="#18181a"/><path d="M0,-12 A12 12 0 0 0 -3.51,-11.47" stroke="#3cc4dc" stroke-width="2" fill="none"/><circle r="9.5" fill="url(#kg)"/><line x1="0" y1="0" x2="-2.63" y2="-8.61" stroke="#111" stroke-width="2"/></svg>
<svg class="kn" style="left:671px;top:591px" viewBox="-15 -15 30 30"><circle r="13" fill="#18181a"/><path d="M0,-12 A12 12 0 0 0 -4.69,-11.05" stroke="#3cc4dc" stroke-width="2" fill="none"/><circle r="9.5" fill="url(#kg)"/><line x1="0" y1="0" x2="-3.52" y2="-8.28" stroke="#111" stroke-width="2"/></svg>
<svg class="kn" style="left:767px;top:591px" viewBox="-15 -15 30 30"><circle r="13" fill="#18181a"/><circle r="9.5" fill="url(#kg)"/><line x1="0" y1="0" x2="0" y2="-9" stroke="#111" stroke-width="2"/></svg>
<div class="kl" style="left:271px;top:622px">-20 dB +20</div><div class="kl" style="left:368px;top:622px">-20 dB +20</div><div class="kl" style="left:464px;top:622px">-20 dB +20</div><div class="kl" style="left:560px;top:622px">-20 dB +20</div><div class="kl" style="left:656px;top:622px">-20 dB +20</div><div class="kl" style="left:752px;top:622px">-20 dB +20</div>
<div class="vb" style="left:279px;top:638px">-12.6</div><div class="vb" style="left:376px;top:638px">-3.9</div><div class="vb" style="left:472px;top:638px">-1.7</div><div class="vb" style="left:568px;top:638px">-2.7</div><div class="vb" style="left:664px;top:638px">-3.7</div><div class="vb" style="left:760px;top:638px">0.0</div>
<!-- Q knobs -->
<svg class="kn" style="left:286px;top:667px" viewBox="-15 -15 30 30"><circle r="13" fill="#18181a"/><path d="M-8.49,8.49 A12 12 0 0 1 -11.82,2.08" stroke="#3cc4dc" stroke-width="2" fill="none"/><circle r="9.5" fill="url(#kg)"/><line x1="0" y1="0" x2="-8.86" y2="1.56" stroke="#111" stroke-width="2"/></svg>
<svg class="kn" style="left:383px;top:667px" viewBox="-15 -15 30 30"><circle r="13" fill="#18181a"/><path d="M-8.49,8.49 A12 12 0 0 1 -11.82,2.08" stroke="#3cc4dc" stroke-width="2" fill="none"/><circle r="9.5" fill="url(#kg)"/><line x1="0" y1="0" x2="-8.86" y2="1.56" stroke="#111" stroke-width="2"/></svg>
<svg class="kn" style="left:479px;top:667px" viewBox="-15 -15 30 30"><circle r="13" fill="#18181a"/><path d="M-8.49,8.49 A12 12 0 0 1 -11.82,2.08" stroke="#3cc4dc" stroke-width="2" fill="none"/><circle r="9.5" fill="url(#kg)"/><line x1="0" y1="0" x2="-8.86" y2="1.56" stroke="#111" stroke-width="2"/></svg>
<svg class="kn" style="left:575px;top:667px" viewBox="-15 -15 30 30"><circle r="13" fill="#18181a"/><path d="M-8.49,8.49 A12 12 0 0 1 -11.82,2.08" stroke="#3cc4dc" stroke-width="2" fill="none"/><circle r="9.5" fill="url(#kg)"/><line x1="0" y1="0" x2="-8.86" y2="1.56" stroke="#111" stroke-width="2"/></svg>
<svg class="kn" style="left:671px;top:667px" viewBox="-15 -15 30 30"><circle r="13" fill="#18181a"/><path d="M-8.49,8.49 A12 12 0 0 1 -11.82,2.08" stroke="#3cc4dc" stroke-width="2" fill="none"/><circle r="9.5" fill="url(#kg)"/><line x1="0" y1="0" x2="-8.86" y2="1.56" stroke="#111" stroke-width="2"/></svg>
<svg class="kn" style="left:767px;top:667px" viewBox="-15 -15 30 30"><circle r="13" fill="#18181a"/><path d="M-8.49,8.49 A12 12 0 0 1 -11.82,2.08" stroke="#3cc4dc" stroke-width="2" fill="none"/><circle r="9.5" fill="url(#kg)"/><line x1="0" y1="0" x2="-8.86" y2="1.56" stroke="#111" stroke-width="2"/></svg>
<div class="kl" style="left:271px;top:698px">Low Q Hi</div><div class="kl" style="left:368px;top:698px">Low Q Hi</div><div class="kl" style="left:464px;top:698px">Low Q Hi</div><div class="kl" style="left:560px;top:698px">Low Q Hi</div><div class="kl" style="left:656px;top:698px">Low Q Hi</div><div class="kl" style="left:752px;top:698px">Low Q Hi</div>
<div class="vb" style="left:279px;top:713px">2.3</div><div class="vb" style="left:376px;top:713px">2.3</div><div class="vb" style="left:472px;top:713px">2.3</div><div class="vb" style="left:568px;top:713px">2.3</div><div class="vb" style="left:664px;top:713px">2.3</div><div class="vb" style="left:760px;top:713px">2.3</div>
</div>

<!-- MIXER -->
<div id="mix" class="a">
<div class="t" style="left:7px;top:4px;font-size:11px;color:#e6e6e8">Mixer</div>
<div class="t" style="left:198px;top:1px;font-size:12px;color:#aaa">•••</div>
<div class="a" style="left:0;top:20px;width:223px;height:1px;background:#111"></div>
<div class="a" style="left:60px;top:21px;width:163px;height:556px;background:#1e1e20"></div>
<div class="a" style="left:61px;top:22px;width:52px;height:3px;background:#4b9a6a"></div>
<div class="a" style="left:116px;top:22px;width:52px;height:3px;background:#4b9a6a"></div>
<div class="a" style="left:170px;top:22px;width:52px;height:3px;background:#2a72c0"></div>
<div class="a" style="left:114px;top:21px;width:1px;height:556px;background:#111"></div>
<div class="a" style="left:168px;top:21px;width:1px;height:556px;background:#111"></div>
<div class="t" style="left:81px;top:28px;color:#e0e0e2;font-size:9.5px">A5</div><div class="t" style="left:136px;top:28px;color:#e0e0e2;font-size:9.5px">A6</div><div class="t" style="left:185px;top:28px;color:#e0e0e2;font-size:9.5px">Bus1</div>
<div class="ml" style="top:48px">Input</div><div class="ml" style="top:76px">Track FX</div><div class="ml" style="top:108px">Order</div><div class="ml" style="top:136px">Effects</div><div class="ml" style="top:184px">Effects In</div><div class="ml" style="top:205px">Dynamics</div><div class="ml" style="top:261px">EQ</div><div class="ml" style="top:294px">Bus Sends</div><div class="ml" style="top:316px">Pan</div>
<div class="mc" style="left:63px;top:45px">No Input</div><div class="mc" style="left:118px;top:45px">No Input</div><div class="mc" style="left:172px;top:45px"></div>
<div class="mc" style="left:63px;top:67px;font-style:italic;color:#777">Voice Iso</div><div class="mc" style="left:118px;top:67px;font-style:italic;color:#777">Voice Iso</div>
<div class="mc" style="left:63px;top:83px;font-style:italic;color:#777">Dial Lev</div><div class="mc" style="left:118px;top:83px;font-style:italic;color:#777">Dial Lev</div>
<div class="mc" style="left:63px;top:105px;font-style:italic;font-weight:bold;font-size:8px"><span style="color:#d4a020">FX DY</span> <span style="color:#3cb4e0">EQ</span></div><div class="mc" style="left:118px;top:105px;font-style:italic;font-weight:bold;font-size:8px"><span style="color:#d4a020">FX DY</span> <span style="color:#3cb4e0">EQ</span></div>
<div class="mc" style="left:63px;top:127px;color:#d4a020">Limiter</div><div class="mc" style="left:118px;top:127px;color:#d4a020">Dialogu...</div><div class="mc" style="left:172px;top:127px;color:#d4a020">Multiba...</div>
<div class="mc" style="left:63px;top:143px;color:#d4a020">FL EQ</div><div class="mc" style="left:172px;top:143px;color:#d4a020">FL EQ</div>
<div class="mc" style="left:63px;top:159px;text-align:center">+</div><div class="mc" style="left:118px;top:159px;text-align:center">+</div><div class="mc" style="left:172px;top:159px;text-align:center">+</div>
<div class="a" style="left:80px;top:181px;width:12px;height:14px;border-radius:4px;background:#c99a18;color:#fff;font-size:8px;text-align:center;line-height:14px">In</div>
<div class="a" style="left:135px;top:181px;width:12px;height:14px;border-radius:4px;background:#c99a18;color:#fff;font-size:8px;text-align:center;line-height:14px">In</div>
<div class="a" style="left:188px;top:181px;width:12px;height:14px;border-radius:4px;background:#c99a18;color:#fff;font-size:8px;text-align:center;line-height:14px">In</div>
<svg class="a" style="left:63px;top:203px" width="160" height="48"><g fill="#19191b" stroke="#2f2f32"><rect x=".5" y=".5" width="46" height="46"/><rect x="55.5" y=".5" width="46" height="46"/><rect x="109.5" y=".5" width="46" height="46"/></g><g stroke="#c9c030"><path d="M2 45L45 2M57 45L100 2M111 45L154 2"/></g></svg>
<svg class="a" style="left:63px;top:259px" width="160" height="24"><g fill="#19191b" stroke="#2f2f32"><rect x=".5" y=".5" width="46" height="22"/><rect x="55.5" y=".5" width="46" height="22"/><rect x="109.5" y=".5" width="46" height="22"/></g><g stroke="#3cc4dc"><path d="M1 11h45M56 11h45M110 11h45"/></g></svg>
<div class="mc" style="left:63px;top:291px;text-align:center;color:#444">+</div><div class="mc" style="left:118px;top:291px;text-align:center;color:#444">+</div><div class="mc" style="left:172px;top:291px;text-align:center;color:#444">+</div>
<div class="mc" style="left:63px;top:313px;height:24px"></div><div class="mc" style="left:118px;top:313px;height:24px"></div>
<div class="a" style="left:85px;top:315px;width:4px;height:4px;background:#3cc4dc"></div><div class="a" style="left:140px;top:315px;width:4px;height:4px;background:#3cc4dc"></div>
<div class="a" style="left:60px;top:338px;width:163px;height:1px;background:#111"></div>
<div class="t" style="left:74px;top:343px;color:#e0e0e2;font-size:9.5px">Tom 1</div><div class="t" style="left:128px;top:343px;color:#e0e0e2;font-size:9.5px">Snare</div><div class="t" style="left:183px;top:343px;color:#e0e0e2;font-size:9.5px">Bus 1</div>
<div class="a" style="left:60px;top:360px;width:163px;height:1px;background:#111"></div>
<div class="t" style="left:66px;top:365px;font-size:8px;color:#777;word-spacing:5px">R S M</div>
<div class="t" style="left:121px;top:365px;font-size:8px;color:#777;word-spacing:5px">R S M</div>
<div class="t" style="left:191px;top:365px;font-size:8px;color:#777">M</div>
<div class="t" style="left:80px;top:386px;font-size:10px;color:#666">⌃</div><div class="t" style="left:135px;top:386px;font-size:10px;color:#666">⌃</div><div class="t" style="left:188px;top:386px;font-size:10px;color:#666">⌃</div>
<div class="a" style="left:60px;top:404px;width:163px;height:1px;background:#111"></div>
<div class="t" style="left:63px;top:408px;font-size:8px;color:#ccc">0.0</div><div class="t" style="left:118px;top:408px;font-size:8px;color:#ccc">0.0</div><div class="t" style="left:172px;top:408px;font-size:8px;color:#ccc">-6.2</div>
<div class="sc" style="left:82px;top:418px;font-size:6.5px;line-height:14px;color:#666">0<br>5<br>10<br>15<br>20<br>30<br>40<br>50</div>
<div class="sc" style="left:137px;top:418px;font-size:6.5px;line-height:14px;color:#666">0<br>5<br>10<br>15<br>20<br>30<br>40<br>50</div>
<div class="a" style="left:72px;top:420px;width:2px;height:140px;background:#111"></div><div class="a" style="left:67px;top:455px;width:11px;height:14px;background:#9a9a9e;border-radius:2px"></div>
<div class="a" style="left:127px;top:420px;width:2px;height:140px;background:#111"></div><div class="a" style="left:122px;top:455px;width:11px;height:14px;background:#9a9a9e;border-radius:2px"></div>
<div class="a" style="left:181px;top:420px;width:2px;height:140px;background:#111"></div><div class="a" style="left:176px;top:478px;width:11px;height:14px;background:#9a9a9e;border-radius:2px"></div>
<div class="a" style="left:96px;top:420px;width:6px;height:143px;background:#151517"><i class="a" style="left:0;bottom:0;width:6px;height:90px;background:linear-gradient(to top,#1fba2a 80%,#e7dc57 80%)"></i></div>
<div class="a" style="left:151px;top:420px;width:6px;height:143px;background:#151517"><i class="a" style="left:0;bottom:0;width:6px;height:96px;background:linear-gradient(to top,#1fba2a 80%,#e7dc57 80%)"></i></div>
<div class="a" style="left:203px;top:420px;width:6px;height:143px;background:#151517"><i class="a" style="left:0;bottom:0;width:6px;height:122px;background:linear-gradient(to top,#1fba2a 85%,#e7dc57 85%)"></i></div>
<div class="a" style="left:211px;top:420px;width:6px;height:143px;background:#151517"><i class="a" style="left:0;bottom:0;width:6px;height:122px;background:linear-gradient(to top,#1fba2a 85%,#e7dc57 85%)"></i></div>
<div class="a" style="left:66px;top:570px;width:24px;height:5px;background:#4a4a4e;border-radius:3px"></div>
</div>

<!-- BOTTOM BAR -->
<div class="a" style="left:0;top:840px;width:1568px;height:42px;background:#1c1c1e;border-top:1px solid #111"></div>
<svg class="a" style="left:37px;top:855px" width="16" height="14"><circle cx="8" cy="3.5" r="3" fill="#ddd"/><circle cx="3.5" cy="10.5" r="3" fill="#ddd"/><circle cx="12.5" cy="10.5" r="3" fill="#ddd"/></svg>
<div class="t" style="left:59px;top:856px;font-size:11px;font-weight:bold;color:#e6e6e8">DaVinci Resolve Studio 21</div>
<div class="pg" style="left:451px"><svg width="16" height="14"><rect x="1" y="1" width="14" height="12" fill="none" stroke="#777"/><path d="M3 11l4-4 3 3 2-2 2 3z" fill="#777"/></svg><span>Media</span></div>
<div class="pg" style="left:534px"><svg width="16" height="14"><rect x="1" y="3" width="14" height="10" rx="2" fill="none" stroke="#777"/><circle cx="8" cy="8" r="3" fill="none" stroke="#777"/></svg><span>Photo</span></div>
<div class="pg" style="left:617px"><svg width="18" height="14"><path d="M1 3h16M1 8h16M4 13h10M6 1l-2 12M13 1l-2 12" stroke="#777" fill="none"/></svg><span>Cut</span></div>
<div class="pg" style="left:701px"><svg width="16" height="14"><path d="M1 3h14M1 7h14M1 11h14M5 1v4M11 5v4M7 9v4" stroke="#777" stroke-width="1.3" fill="none"/></svg><span>Edit</span></div>
<div class="pg" style="left:784px"><svg width="16" height="14"><path d="M3 13l9-11M9 2h4v4" stroke="#777" stroke-width="1.4" fill="none"/></svg><span>Fusion</span></div>
<div class="pg" style="left:867px"><svg width="16" height="14"><circle cx="8" cy="7" r="2" fill="#777"/><g fill="#777"><circle cx="8" cy="1.5" r="1.2"/><circle cx="8" cy="12.5" r="1.2"/><circle cx="2.5" cy="7" r="1.2"/><circle cx="13.5" cy="7" r="1.2"/><circle cx="4" cy="3" r="1"/><circle cx="12" cy="3" r="1"/><circle cx="4" cy="11" r="1"/><circle cx="12" cy="11" r="1"/></g></svg><span>Color</span></div>
<div class="pg" style="left:951px;background:#2a2a2d;color:#f2f2f2;font-weight:bold"><svg width="16" height="14"><path d="M5 11V2l8-1v9" stroke="#3fd070" stroke-width="1.5" fill="none"/><circle cx="3.5" cy="11" r="2.3" fill="#3fd070"/><circle cx="11.5" cy="10" r="2.3" fill="#3fd070"/></svg><span>Fairlight</span></div>
<div class="pg" style="left:1034px"><svg width="16" height="14"><path d="M2 12l4-6 3 3 5-8M10 1h4v4" stroke="#777" stroke-width="1.3" fill="none"/></svg><span>Deliver</span></div>
<svg class="a" style="left:1371px;top:854px" width="18" height="16"><path d="M2 10a7 7 0 0 1 14 0M1 13h16" stroke="#4a8ad8" stroke-width="1.4" fill="none"/><rect x="5" y="8" width="8" height="4" fill="#4a8ad8"/></svg>
<svg class="a" style="left:1412px;top:855px" width="16" height="14"><path d="M1 2h14v8H6l-4 3V10H1z" fill="#aaa"/></svg>
<svg class="a" style="left:1451px;top:855px" width="18" height="14"><circle cx="6" cy="4" r="3" fill="#aaa"/><circle cx="13" cy="5" r="2.5" fill="#aaa"/><path d="M0 13q6-8 12 0M10 13q4-6 8 0" fill="#aaa"/></svg>
<svg class="a" style="left:1492px;top:855px" width="16" height="14"><path d="M1 7l7-6 7 6h-2v6H9V9H7v4H3V7z" fill="#aaa"/></svg>
<svg class="a" style="left:1532px;top:855px" width="15" height="15"><circle cx="7.5" cy="7.5" r="4.5" fill="none" stroke="#aaa" stroke-width="3" stroke-dasharray="2.4 1.2"/><circle cx="7.5" cy="7.5" r="2" fill="#1c1c1e"/></svg>

</div></body></html>
